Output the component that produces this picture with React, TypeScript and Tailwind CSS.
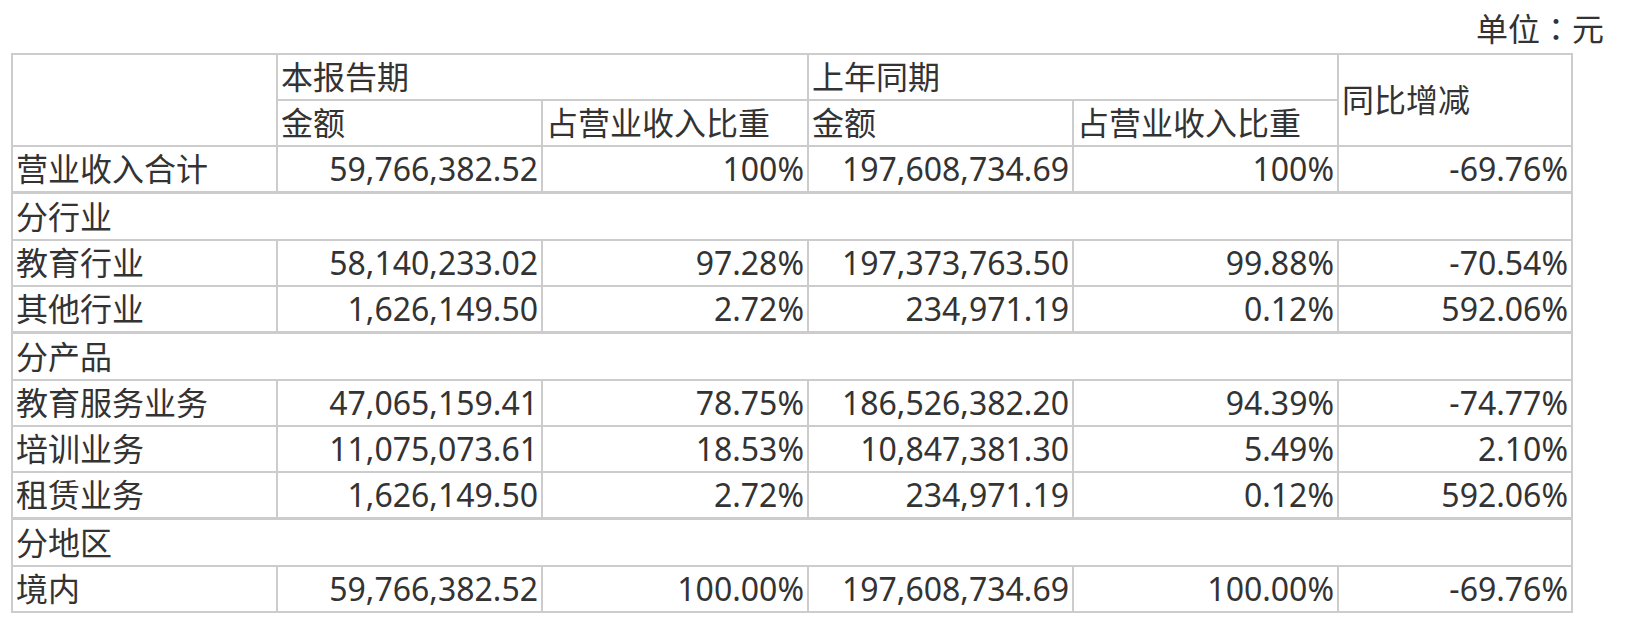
import React from "react";

type Row =
  | { kind: "section"; label: string }
  | { kind: "data"; label: string; v: string[] };

const rows: Row[] = [
  { kind: "data", label: "营业收入合计", v: ["59,766,382.52", "100%", "197,608,734.69", "100%", "-69.76%"] },
  { kind: "section", label: "分行业" },
  { kind: "data", label: "教育行业", v: ["58,140,233.02", "97.28%", "197,373,763.50", "99.88%", "-70.54%"] },
  { kind: "data", label: "其他行业", v: ["1,626,149.50", "2.72%", "234,971.19", "0.12%", "592.06%"] },
  { kind: "section", label: "分产品" },
  { kind: "data", label: "教育服务业务", v: ["47,065,159.41", "78.75%", "186,526,382.20", "94.39%", "-74.77%"] },
  { kind: "data", label: "培训业务", v: ["11,075,073.61", "18.53%", "10,847,381.30", "5.49%", "2.10%"] },
  { kind: "data", label: "租赁业务", v: ["1,626,149.50", "2.72%", "234,971.19", "0.12%", "592.06%"] },
  { kind: "section", label: "分地区" },
  { kind: "data", label: "境内", v: ["59,766,382.52", "100.00%", "197,608,734.69", "100.00%", "-69.76%"] },
];

const cell =
  "border-r-2 border-b-2 border-[#cccccc] px-[3px] h-[46px] align-middle whitespace-nowrap leading-[44px]";

export default function App() {
  return (
    <div
      className="w-[1642px] h-[634px] bg-white text-[#333333] text-[32px]"
      style={{ fontFamily: '"Noto Sans", "Noto Sans CJK SC", sans-serif' }}
    >
      <div className="pt-[4px] mb-[3px] h-[50px] leading-[46px] text-right pr-[38px]">
        单位
        <span style={{ fontFamily: '"Noto Sans CJK TC", sans-serif' }}>：</span>
        元
      </div>
      <table className="ml-[11px] w-[1562px] table-fixed border-separate border-spacing-0 border-l-2 border-t-2 border-[#cccccc]">
        <colgroup>
          <col className="w-[265px]" />
          <col className="w-[265px]" />
          <col className="w-[266px]" />
          <col className="w-[265px]" />
          <col className="w-[265px]" />
          <col className="w-[234px]" />
        </colgroup>
        <tbody>
          <tr>
            <td rowSpan={2} className={cell}></td>
            <td colSpan={2} className={`${cell} text-left font-normal`}>本报告期</td>
            <td colSpan={2} className={`${cell} text-left font-normal`}>上年同期</td>
            <td rowSpan={2} className={`${cell} text-left font-normal`}>同比增减</td>
          </tr>
          <tr>
            <td className={`${cell} text-left`}>金额</td>
            <td className={`${cell} text-left`}>占营业收入比重</td>
            <td className={`${cell} text-left`}>金额</td>
            <td className={`${cell} text-left`}>占营业收入比重</td>
          </tr>
          {rows.map((r, i) =>
            r.kind === "section" ? (
              <tr key={i}>
                <td colSpan={6} className={`${cell} border-t-[1px] h-[48px] text-left`}>
                  {r.label}
                </td>
              </tr>
            ) : (
              <tr key={i}>
                <td className={`${cell} text-left`}>{r.label}</td>
                {r.v.map((x, j) => (
                  <td key={j} className={`${cell} text-right`}>
                    {x}
                  </td>
                ))}
              </tr>
            )
          )}
        </tbody>
      </table>
    </div>
  );
}
